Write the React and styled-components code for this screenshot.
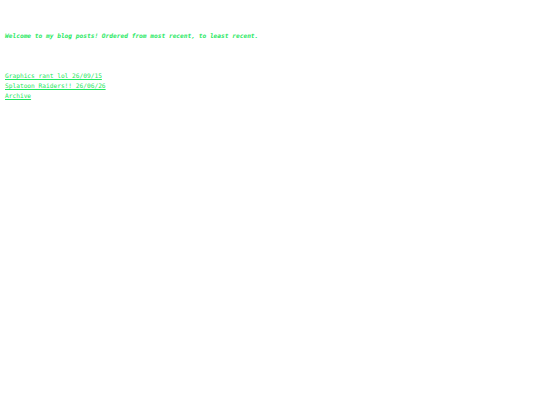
import styled, { createGlobalStyle } from "styled-components";

const GlobalStyle = createGlobalStyle`
  body {
    margin: 0;
    background: #ffffff;
    font-family: "DejaVu Sans Mono", "Liberation Mono", monospace;
  }
`;

const Page = styled.main`
  padding: 31px 5px 0;
  color: #1ee860;
  font-size: 6.2px;
`;

const Intro = styled.p`
  margin: 0 0 30px;
  font-weight: bold;
  font-style: italic;
  line-height: 10px;
`;

const PostList = styled.nav`
  display: flex;
  flex-direction: column;
  align-items: flex-start;
`;

const PostLink = styled.a`
  color: #1ee860;
  line-height: 10px;
  text-decoration: underline;
`;

const posts = [
  { title: "Graphics rant lol 26/09/15", href: "#graphics" },
  { title: "Splatoon Raiders!! 26/06/26", href: "#splatoon" },
  { title: "Archive", href: "#archive" },
];

const App = () => {
  return (
    <>
      <GlobalStyle />
      <Page>
        <Intro>
          Welcome to my blog posts! Ordered from most recent, to least recent.
        </Intro>
        <PostList>
          {posts.map((post) => (
            <PostLink key={post.href} href={post.href}>
              {post.title}
            </PostLink>
          ))}
        </PostList>
      </Page>
    </>
  );
};
export default App;
